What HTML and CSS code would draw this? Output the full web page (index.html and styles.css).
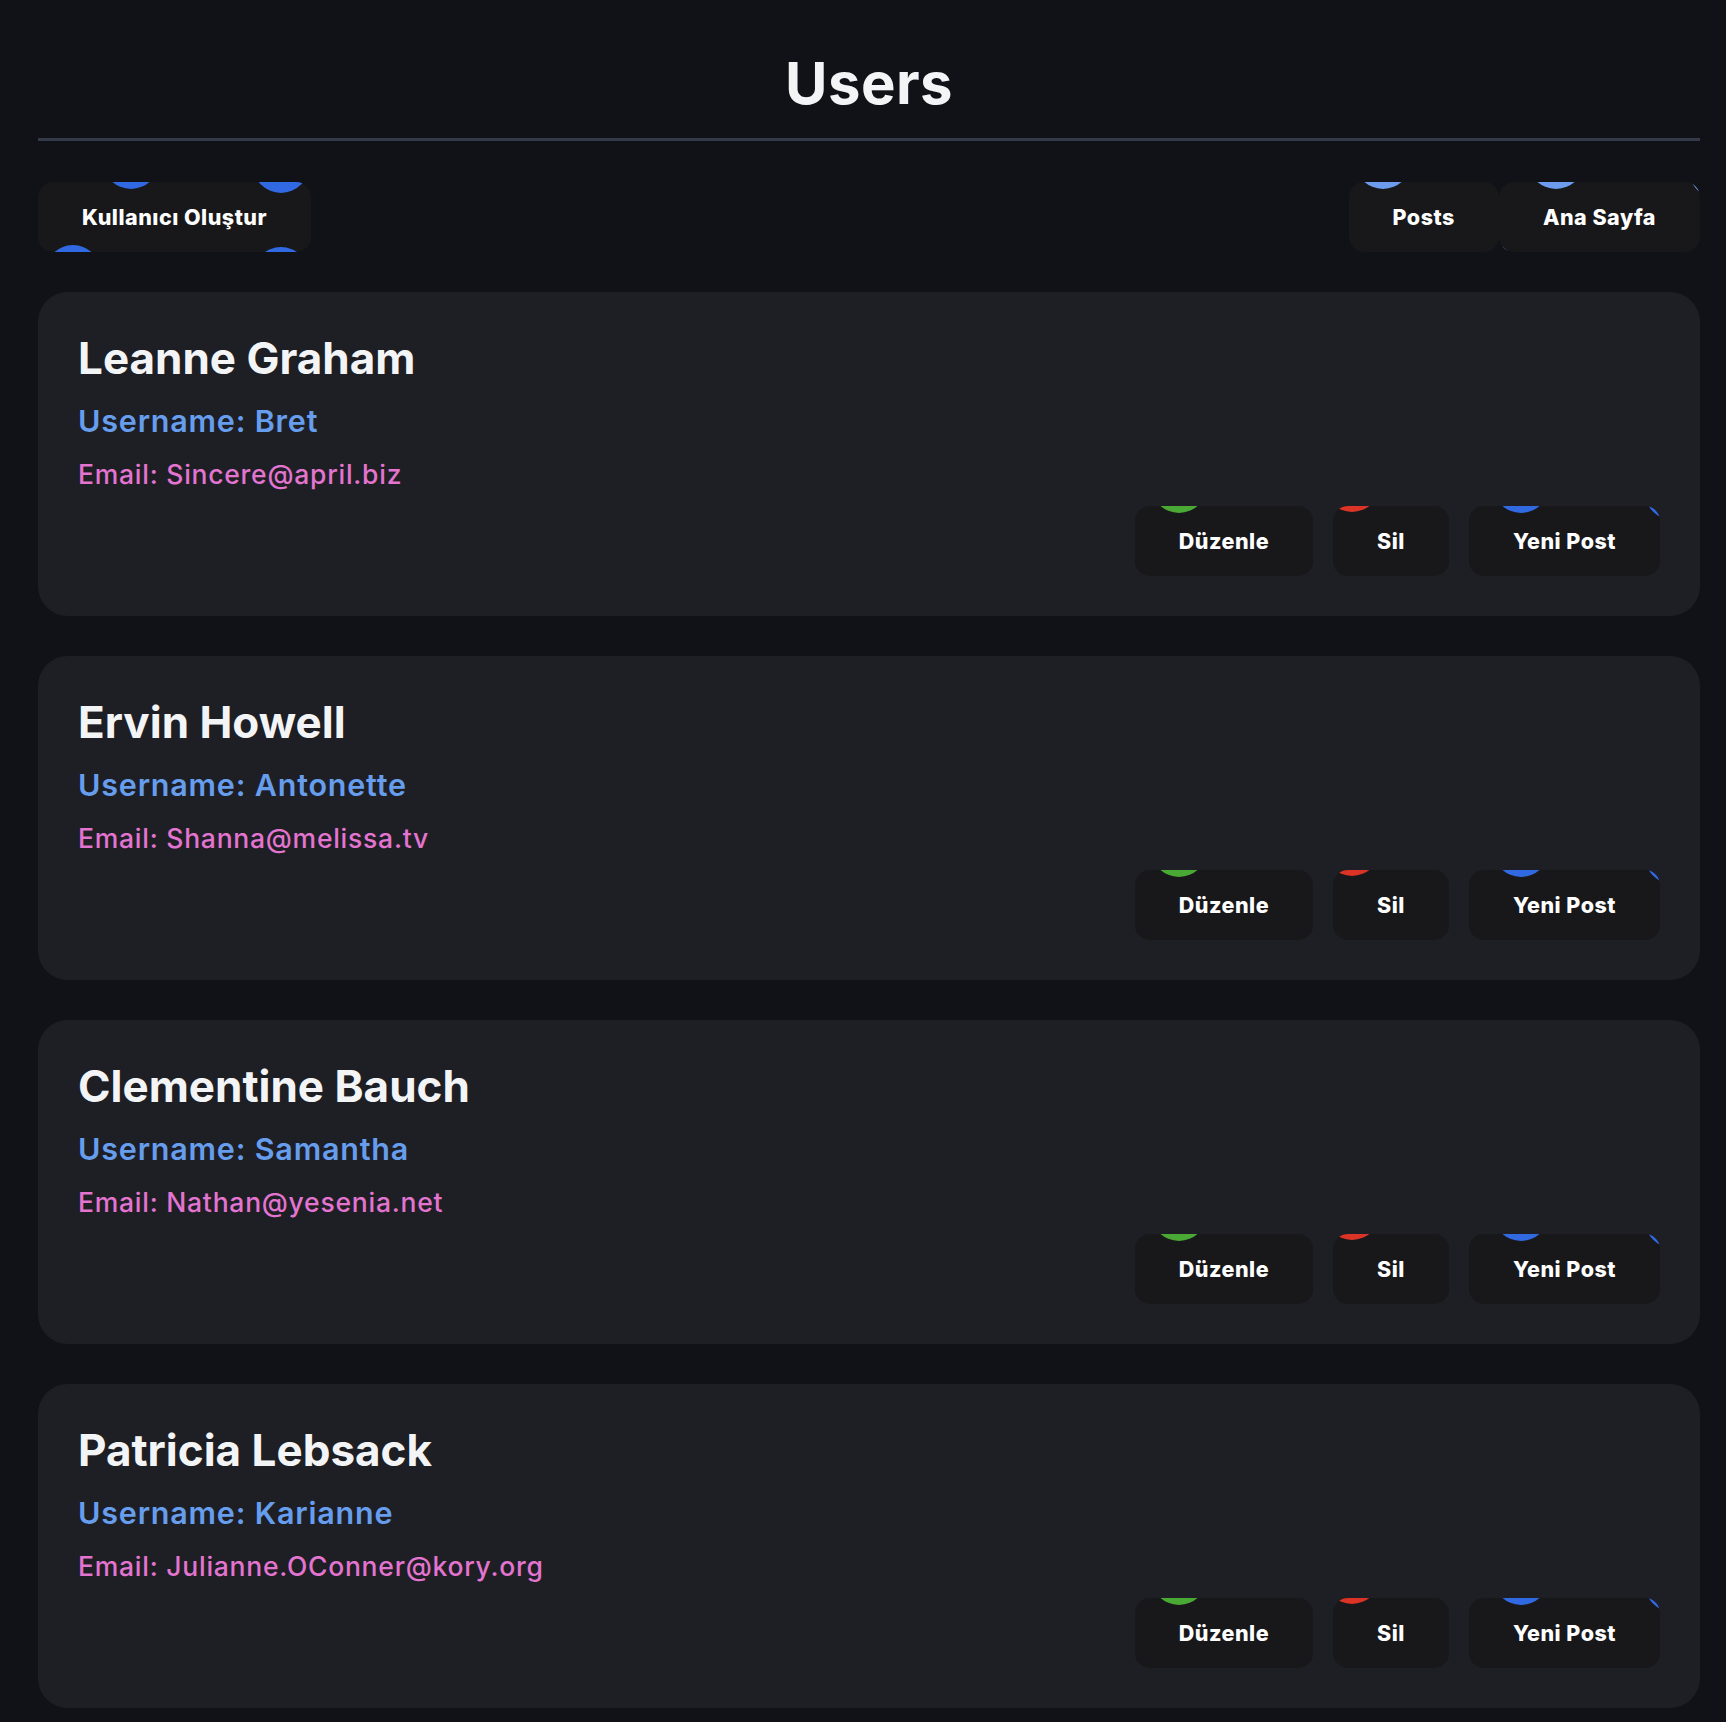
FILE: index.html
```html
<!DOCTYPE html>
<html lang="tr">
<head>
<meta charset="utf-8">
<title>Users</title>
<link rel="stylesheet" href="styles.css">
</head>
<body>
<div class="page">
  <header class="header">
    <h1 class="title">Users</h1>
  </header>
  <nav class="toolbar">
    <button class="btn btn-create">
      <span class="bub bub-blue c-create-1"></span>
      <span class="bub bub-blue c-create-2"></span>
      <span class="bub bub-blue c-create-3"></span>
      <span class="bub bub-blue c-create-4"></span>
      <span class="label">Kullanıcı Oluştur</span>
    </button>
    <div class="nav-right">
      <button class="btn btn-posts">
        <span class="bub bub-light c-posts-1"></span>
        <span class="label">Posts</span>
      </button>
      <button class="btn btn-home">
        <span class="bub bub-light c-home-1"></span>
        <span class="bub bub-light c-home-2"></span>
        <span class="bub bub-light c-home-3"></span>
        <span class="label">Ana Sayfa</span>
      </button>
    </div>
  </nav>

  <main class="list">
    <section class="card">
      <h2 class="name">Leanne Graham</h2>
      <p class="username">Username: Bret</p>
      <p class="email">Email: Sincere@april.biz</p>
      <div class="actions">
        <button class="btn btn-edit"><span class="bub bub-green c-edit"></span><span class="label">Düzenle</span></button>
        <button class="btn btn-del"><span class="bub bub-red c-del"></span><span class="label">Sil</span></button>
        <button class="btn btn-new"><span class="bub bub-blue c-new-1"></span><span class="bub bub-blue c-new-2"></span><span class="label">Yeni Post</span></button>
      </div>
    </section>
    <section class="card">
      <h2 class="name">Ervin Howell</h2>
      <p class="username">Username: Antonette</p>
      <p class="email">Email: Shanna@melissa.tv</p>
      <div class="actions">
        <button class="btn btn-edit"><span class="bub bub-green c-edit"></span><span class="label">Düzenle</span></button>
        <button class="btn btn-del"><span class="bub bub-red c-del"></span><span class="label">Sil</span></button>
        <button class="btn btn-new"><span class="bub bub-blue c-new-1"></span><span class="bub bub-blue c-new-2"></span><span class="label">Yeni Post</span></button>
      </div>
    </section>
    <section class="card">
      <h2 class="name">Clementine Bauch</h2>
      <p class="username">Username: Samantha</p>
      <p class="email">Email: Nathan@yesenia.net</p>
      <div class="actions">
        <button class="btn btn-edit"><span class="bub bub-green c-edit"></span><span class="label">Düzenle</span></button>
        <button class="btn btn-del"><span class="bub bub-red c-del"></span><span class="label">Sil</span></button>
        <button class="btn btn-new"><span class="bub bub-blue c-new-1"></span><span class="bub bub-blue c-new-2"></span><span class="label">Yeni Post</span></button>
      </div>
    </section>
    <section class="card">
      <h2 class="name">Patricia Lebsack</h2>
      <p class="username">Username: Karianne</p>
      <p class="email">Email: Julianne.OConner@kory.org</p>
      <div class="actions">
        <button class="btn btn-edit"><span class="bub bub-green c-edit"></span><span class="label">Düzenle</span></button>
        <button class="btn btn-del"><span class="bub bub-red c-del"></span><span class="label">Sil</span></button>
        <button class="btn btn-new"><span class="bub bub-blue c-new-1"></span><span class="bub bub-blue c-new-2"></span><span class="label">Yeni Post</span></button>
      </div>
    </section>
  </main>
</div>
</body>
</html>
```

FILE: styles.css
```css
* { box-sizing: border-box; }

html, body {
  margin: 0;
  background: #111217;
}

body {
  font-family: Inter, "Noto Sans", "Liberation Sans", sans-serif;
  color: #f3f4f6;
}

.page {
  padding: 48px 26px 40px 38px;
}

.header {
  border-bottom: 3px solid #343a48;
  padding-bottom: 20px;
  text-align: center;
}

.title {
  margin: 0;
  font-size: 58px;
  line-height: 70px;
  font-weight: 700;
  color: #f3f4f6;
  letter-spacing: 0.5px;
}

.toolbar {
  margin-top: 41px;
  display: flex;
  justify-content: space-between;
  align-items: center;
}

.nav-right {
  display: flex;
}

.btn {
  position: relative;
  overflow: hidden;
  height: 70px;
  padding: 0 44px;
  border: none;
  border-radius: 15px;
  background: #18181a;
  color: #ffffff;
  font-family: Inter, "Noto Sans", "Liberation Sans", sans-serif;
  font-size: 21.5px;
  font-weight: 800;
  letter-spacing: 0.5px;
  cursor: pointer;
}

.label {
  position: relative;
}

.bub {
  position: absolute;
  width: 56px;
  height: 56px;
  border-radius: 50%;
}

.bub-blue { background: #3169e2; }
.bub-light { background: #6d9cee; }
.bub-green { background: #4aa935; }
.bub-red { background: #db3426; }

.c-create-1 { left: 65px; top: -49px; }
.c-create-2 { left: 215px; top: -45px; }
.c-create-3 { left: 7px; top: 63px; }
.c-create-4 { left: 215px; top: 65px; }

.c-posts-1 { left: 6px; top: -49px; }
.c-home-1 { left: 29px; top: -49px; }
.c-home-2 { left: 190px; top: -40px; }
.c-home-3 { left: -40px; top: 60px; }

.c-edit { left: 16px; top: -49px; }
.c-del { left: -9px; top: -50px; }
.c-new-1 { left: 24px; top: -49px; }
.c-new-2 { left: 176px; top: -42px; }

.list {
  margin-top: 40px;
  display: flex;
  flex-direction: column;
  gap: 40px;
}

.card {
  background: #1e1f24;
  border-radius: 30px;
  padding: 40px;
}

.name {
  margin: 0 0 18px;
  font-size: 44px;
  line-height: 53px;
  font-weight: 700;
  color: #f3f4f6;
}

.username {
  margin: 0 0 19px;
  font-size: 30.5px;
  line-height: 36px;
  font-weight: 600;
  letter-spacing: 0.8px;
  color: #669ded;
}

.email {
  margin: 0;
  font-size: 26.5px;
  line-height: 32px;
  font-weight: 500;
  letter-spacing: 0.75px;
  color: #e374d0;
}

.actions {
  margin-top: 16px;
  display: flex;
  justify-content: flex-end;
  gap: 20px;
}
```
